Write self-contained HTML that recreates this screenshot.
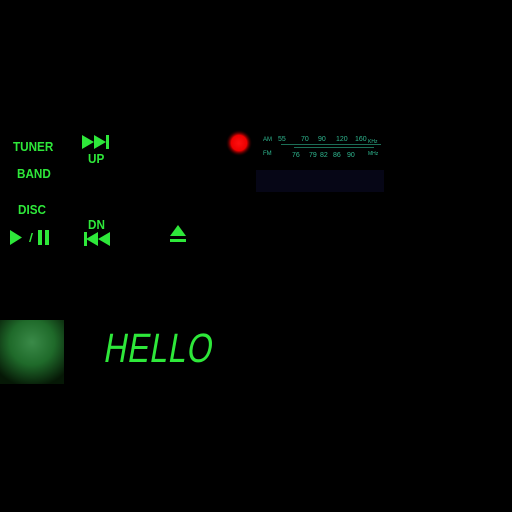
<!DOCTYPE html>
<html><head><style>
html,body{margin:0;background:#000;width:512px;height:512px;overflow:hidden;position:relative;font-family:"Liberation Sans",sans-serif}
.t{position:absolute;color:#2ee83a;font-weight:bold;font-size:13px;transform:scaleX(0.9);transform-origin:left}
</style></head><body>
<div class="t" style="left:13px;top:139px">TUNER</div>
<div class="t" style="left:17px;top:166px">BAND</div>
<div class="t" style="left:18px;top:202px">DISC</div>
<div class="t" style="left:88px;top:151px">UP</div>
<div class="t" style="left:88px;top:217px">DN</div>
<svg width="512" height="512" style="position:absolute;left:0;top:0">
<g fill="#2ee83a">
<polygon points="82,135 94,142 82,149"/><polygon points="94,135 106,142 94,149"/><rect x="106" y="135" width="3" height="14"/>
<rect x="84" y="232" width="3" height="14"/><polygon points="98,232 86,239 98,246"/><polygon points="110,232 98,239 110,246"/>
<polygon points="10,230 22,237.5 10,245"/><polygon points="29,242 30.5,242 33,233 31.5,233"/>
<rect x="38" y="230" width="4" height="15"/><rect x="45" y="230" width="4" height="15"/>
<polygon points="170,236 178,225 186,236"/><rect x="170" y="239" width="16" height="3"/>
</g>
<defs><radialGradient id="r"><stop offset="0" stop-color="#ff1010"/><stop offset="0.6" stop-color="#ee0000"/><stop offset="1" stop-color="#300" stop-opacity="0"/></radialGradient>
<radialGradient id="g" cx="0.5" cy="0.35" r="0.7"><stop offset="0" stop-color="#3a8a48"/><stop offset="0.5" stop-color="#1f6a2a"/><stop offset="1" stop-color="#061806"/></radialGradient></defs>
<circle cx="239" cy="143" r="13" fill="url(#r)"/>
<rect x="256" y="170" width="128" height="22" fill="#060616"/>
<g fill="#2fb890" font-family="Liberation Sans" font-size="7">
<text x="263" y="141" font-size="6">AM</text><text x="263" y="155" font-size="6">FM</text>
<text x="278" y="141">55</text><text x="301" y="141">70</text><text x="318" y="141">90</text><text x="336" y="141">120</text><text x="355" y="141">160</text>
<text x="368" y="143" font-size="5">KHz</text><text x="368" y="155" font-size="5">MHz</text>
<text x="292" y="157">76</text><text x="309" y="157">79</text><text x="320" y="157">82</text><text x="333" y="157">86</text><text x="347" y="157">90</text>
<rect x="281" y="144" width="100" height="1" opacity="0.6"/><rect x="294" y="147" width="80" height="1" opacity="0.6"/>
</g>
<rect x="0" y="320" width="64" height="64" fill="url(#g)"/>
</svg>
<div style="position:absolute;left:105px;top:325px;color:#2ee83a;font-size:41px;line-height:47px;letter-spacing:1px;transform:skewX(-10deg) scaleX(0.78);transform-origin:left;font-family:'Liberation Sans',sans-serif">HELLO</div>
</body></html>
